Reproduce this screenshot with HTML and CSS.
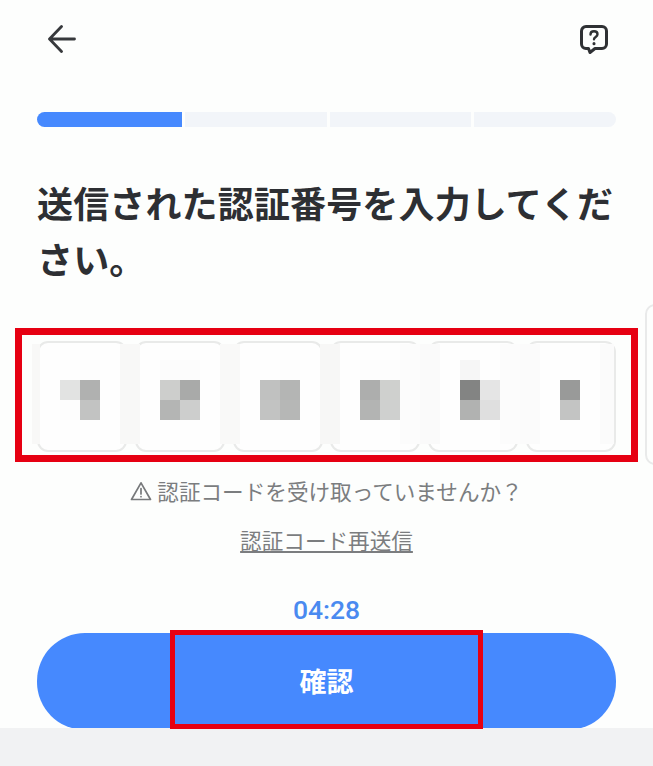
FILE: index.html
```html
<!DOCTYPE html>
<html lang="ja">
<head>
    <meta charset="UTF-8">
    <meta name="viewport" content="width=device-width, initial-scale=1.0">
    <title>認証番号の入力</title>
    <link rel="stylesheet" href="styles.css">
</head>
<body>
    <div class="page">
        <div class="content">
            <!-- header -->
            <div class="top-bar">
                <svg class="icon-back" width="28" height="28" viewBox="0 0 28 28" fill="none" stroke="#37393c" stroke-width="2.8" stroke-linecap="round" stroke-linejoin="round">
                    <path d="M26.500 14H2M13.500 1.500 1.500 14l12 12.500"/>
                </svg>
                <svg class="icon-help" width="28" height="29" viewBox="0 0 28 29" fill="none" stroke="#2f3134" stroke-width="3" stroke-linecap="round" stroke-linejoin="round">
                    <path d="M6 1.500h16a4.500 4.500 0 0 1 4.500 4.500v13a4.500 4.500 0 0 1-4.500 4.500h-7l-5 4-1.500-4H6a4.500 4.500 0 0 1-4.500-4.500V6A4.500 4.500 0 0 1 6 1.500z"/>
                    <path d="M10.500 9.500c0-2 1.500-3.200 3.500-3.200s3.500 1.200 3.500 3c0 2.700-3.500 2.500-3.500 5" stroke-width="2.400"/>
                    <path d="M14 18.500v.2" stroke-width="3"/>
                </svg>
            </div>

            <!-- progress -->
            <div class="progress">
                <div class="step step-done"></div>
                <div class="step"></div>
                <div class="step"></div>
                <div class="step"></div>
            </div>

            <h1 class="title">送信された認証番号を入力してください。</h1>

            <!-- code boxes -->
            <div class="code-row">
                <div class="code-box"></div>
                <div class="code-box"></div>
                <div class="code-box"></div>
                <div class="code-box"></div>
                <div class="code-box"></div>
                <div class="code-box"></div>
            </div>

            <p class="notice">
                <svg class="icon-warn" width="22" height="20" viewBox="0 0 22 20" fill="none" stroke="#77797b" stroke-width="1.700" stroke-linejoin="round" stroke-linecap="round">
                    <path d="M11 1.800 20.500 18.500H1.500z"/>
                    <path d="M11 7.500v5.500M11 15.500v.2"/>
                </svg>
                <span>認証コードを受け取っていませんか？</span>
            </p>
            <p class="resend"><a href="#">認証コード再送信</a></p>
            <p class="timer">04:28</p>
            <button class="confirm">確認</button>
        </div>
        <div class="footer-bar"></div>

        <!-- next slide peeking in at the right edge -->
        <div class="peek-card"></div>

        <!-- pixelated code digits -->
        <svg class="mosaic" width="653" height="766" viewBox="0 0 653 766" shape-rendering="crispEdges">
            <g fill="#f8f8f7">
                <rect x="32" y="344" width="8" height="100"/>
                <rect x="120" y="344" width="20" height="100"/>
                <rect x="220" y="344" width="20" height="100" fill="#f9f9f8"/>
                <rect x="320" y="344" width="20" height="100" fill="#f7f7f6"/>
                <rect x="400" y="344" width="20" height="100" fill="#fcfcfc"/>
                <rect x="420" y="344" width="20" height="100" fill="#fafafa"/>
                <rect x="500" y="344" width="20" height="100" fill="#fcfcfc"/>
                <rect x="520" y="344" width="20" height="100" fill="#fbfbfb"/>
                <rect x="600" y="344" width="14" height="100" fill="#fbfbfb"/>
            </g>
            <rect x="80" y="360" width="20" height="20" fill="#fdfdfd"/>
            <rect x="60" y="380" width="20" height="20" fill="#e2e3e2"/>
            <rect x="80" y="380" width="20" height="20" fill="#b0b1b0"/>
            <rect x="60" y="400" width="20" height="20" fill="#fdfdfd"/>
            <rect x="80" y="400" width="20" height="20" fill="#c2c3c2"/>

            <rect x="160" y="360" width="40" height="20" fill="#fcfcfc"/>
            <rect x="160" y="380" width="20" height="20" fill="#cdcecc"/>
            <rect x="180" y="380" width="20" height="20" fill="#a9aaa9"/>
            <rect x="160" y="400" width="20" height="20" fill="#b4b5b4"/>
            <rect x="180" y="400" width="20" height="20" fill="#cdcecd"/>

            <rect x="280" y="360" width="20" height="20" fill="#fdfdfd"/>
            <rect x="260" y="380" width="20" height="20" fill="#c0c1c0"/>
            <rect x="280" y="380" width="20" height="20" fill="#b4b5b4"/>
            <rect x="260" y="400" width="20" height="20" fill="#c2c3c2"/>
            <rect x="280" y="400" width="20" height="20" fill="#b6b7b6"/>

            <rect x="360" y="360" width="40" height="20" fill="#fdfdfd"/>
            <rect x="360" y="380" width="20" height="20" fill="#adaead"/>
            <rect x="380" y="380" width="20" height="20" fill="#cfd0ce"/>
            <rect x="360" y="400" width="20" height="20" fill="#b3b4b3"/>
            <rect x="380" y="400" width="20" height="20" fill="#cfd0cf"/>

            <rect x="460" y="360" width="20" height="20" fill="#f6f6f6"/>
            <rect x="460" y="380" width="20" height="20" fill="#838483"/>
            <rect x="480" y="380" width="20" height="20" fill="#e5e5e5"/>
            <rect x="460" y="400" width="20" height="20" fill="#b1b2b1"/>
            <rect x="480" y="400" width="20" height="20" fill="#dfdfdf"/>

            <rect x="560" y="380" width="20" height="20" fill="#999a99"/>
            <rect x="560" y="400" width="20" height="20" fill="#c3c4c3"/>
        </svg>

        <!-- red annotation frames -->
        <div class="mark mark-code"></div>
        <div class="mark mark-button"></div>
    </div>
</body>
</html>
```

FILE: styles.css
```css
html, body {
    margin: 0;
    padding: 0;
}
body {
    font-family: "Noto Sans CJK JP", "Noto Sans", sans-serif;
    background-color: #fdfefd;
}
.page {
    position: relative;
    width: 653px;
    height: 766px;
    overflow: hidden;
    background-color: #fdfefd;
}
.content {
    padding: 25px 37px 0;
}
.top-bar {
    display: flex;
    justify-content: space-between;
    align-items: flex-start;
    height: 28px;
    padding: 0 8px 0 11px;
}
.icon-help {
    display: block;
}
.progress {
    display: flex;
    gap: 3px;
    height: 15px;
    margin-top: 59px;
    border-radius: 8px;
    overflow: hidden;
}
.step {
    flex: 1;
    background-color: #f2f5f9;
}
.step-done {
    flex: 0 0 145px;
    background-color: #4689fe;
}
.title {
    margin: 47px 0 0;
    font-size: 36px;
    line-height: 56px;
    font-weight: 700;
    letter-spacing: 0.15px;
    color: #2d2f33;
}
.code-row {
    display: flex;
    justify-content: space-between;
    margin-top: 55px;
}
.code-box {
    box-sizing: border-box;
    width: 90px;
    height: 111px;
    border: 2px solid #e9eae9;
    border-radius: 11px;
    background-color: #fefefe;
}
.notice {
    display: flex;
    justify-content: center;
    align-items: center;
    gap: 5px;
    margin: 24px 0 0;
    font-size: 21.6px;
    line-height: 30px;
    color: #7b7d7f;
}
.resend {
    margin: 19px 0 0;
    text-align: center;
    font-size: 21.6px;
    line-height: 30px;
}
.resend a {
    color: #7b7d7f;
    text-decoration: underline;
    text-underline-offset: 2px;
}
.timer {
    margin: 40px 0 0;
    text-align: center;
    font-family: Roboto, "Noto Sans", sans-serif;
    font-size: 26.5px;
    line-height: 30px;
    font-weight: 500;
    color: #4a8af0;
}
.confirm {
    display: block;
    width: 100%;
    height: 97px;
    margin: 8px 0 -2px;
    padding: 0 0 2px;
    border: 0;
    border-radius: 48px;
    background-color: #4689fe;
    color: #fff;
    font-family: inherit;
    font-size: 27px;
    font-weight: 700;
}
.footer-bar {
    position: relative;
    height: 38px;
    background-color: #f1f2f3;
}
.peek-card {
    position: absolute;
    left: 645px;
    top: 304px;
    box-sizing: border-box;
    width: 20px;
    height: 161px;
    border: 2px solid #e9eaea;
    border-radius: 11px;
}
.mosaic {
    position: absolute;
    left: 0;
    top: 0;
    pointer-events: none;
}
.mark {
    position: absolute;
    box-sizing: border-box;
    border-style: solid;
    border-color: #e60012;
}
.mark-code {
    left: 15px;
    top: 328px;
    width: 623px;
    height: 134px;
    border-width: 7px;
}
.mark-button {
    left: 170px;
    top: 630px;
    width: 313px;
    height: 99px;
    border-width: 5px;
}
```
